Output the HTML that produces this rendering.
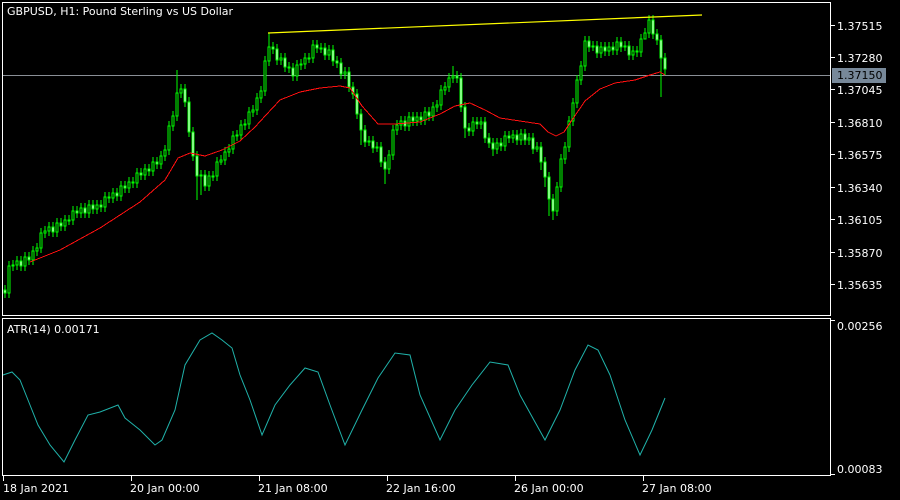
<!DOCTYPE html>
<html><head><meta charset="utf-8">
<style>
html,body{margin:0;padding:0;background:#000;width:900px;height:500px;overflow:hidden}
svg{display:block}
text{font-family:"DejaVu Sans","Liberation Sans",sans-serif;font-size:11px;fill:#fff}
.b{fill:#000;stroke:#00ff00;stroke-width:1}
.w{fill:#fff;stroke:#00ff00;stroke-width:1}
</style></head>
<body>
<svg width="900" height="500" xmlns="http://www.w3.org/2000/svg" shape-rendering="crispEdges">
<rect x="0" y="0" width="900" height="500" fill="#000"/>
<line x1="3" y1="75.5" x2="830" y2="75.5" stroke="#8a8f96" stroke-width="1"/>
<path fill="none" stroke="#00ff00" stroke-width="1" d="M5 285V298M9 261V298M13 260V271M17 256V270M21 256V271M25 252V271M29 252V265M33 246V265M37 243V256M41 228V253M45 226V238M49 222V236M53 222V237M57 218V237M61 218V231M65 215V231M69 215V225M73 206V225M77 206V218M81 203V218M85 203V218M89 200V218M93 200V214M97 200V214M101 200V212M105 192V212M109 192V203M113 188V203M117 188V201M121 181V201M125 181V193M129 177V193M133 177V188M137 168V188M141 168V180M145 164V180M149 164V176M153 157V176M157 157V169M161 151V169M165 145V161M169 121V155M173 111V131M177 70V121M181 84V98M185 84V107M189 97V137M193 127V161M197 151V200M201 170V195M205 170V191M209 171V191M213 171V181M217 157V181M221 155V165M225 147V165M229 144V157M233 131V154M237 130V141M241 120V140M245 119V130M249 107V129M253 105V117M257 93V115M261 86V103M265 56V96M269 33V66M273 42V54M277 44V65M281 53V65M285 53V72M289 62V73M293 63V81M297 60V81M301 59V70M305 53V69M309 53V63M313 40V63M317 40V53M321 43V53M325 43V60M329 45V60M333 45V66M337 56V68M341 58V79M345 67V79M349 67V92M353 82V99M357 89V119M361 109V145M365 125V147M369 136V146M373 136V153M377 142V152M381 142V167M385 157V184M389 150V174M393 125V160M397 120V135M401 116V130M405 116V131M409 112V131M413 112V126M417 112V126M421 112V125M425 107V125M429 107V121M433 102V121M437 100V112M441 85V110M445 82V95M449 73V92M453 66V83M457 71V83M461 73V112M465 102V138M469 123V136M473 117V136M477 117V129M481 117V129M485 117V143M489 133V148M493 138V156M497 138V154M501 138V151M505 131V151M509 131V143M513 130V143M517 130V145M521 129V145M525 129V145M529 133V145M533 133V154M537 142V152M541 142V170M545 157V187M549 172V216M553 194V220M557 182V216M561 154V192M565 142V164M569 116V152M573 98V126M577 75V108M581 61V85M585 36V71M589 36V52M593 41V51M597 41V58M601 42V58M605 42V56M609 42V56M613 42V55M617 37V55M621 37V52M625 41V51M629 41V60M633 46V60M637 46V57M641 34V57M645 28V38M649 15V38M653 15V39M657 29V45M661 35V97M665 53V75"/>
<g>
<rect class="w" x="4" y="290" width="2" height="3"/><rect class="b" x="8" y="266" width="2" height="27"/><rect class="b" x="12" y="265" width="2" height="1"/><rect class="b" x="16" y="261" width="2" height="4"/><rect class="w" x="20" y="261" width="2" height="5"/><rect class="b" x="24" y="257" width="2" height="9"/><rect class="w" x="28" y="257" width="2" height="3"/><rect class="b" x="32" y="251" width="2" height="9"/><rect class="b" x="36" y="248" width="2" height="3"/><rect class="b" x="40" y="233" width="2" height="15"/>
<rect class="b" x="44" y="231" width="2" height="2"/><rect class="b" x="48" y="227" width="2" height="4"/><rect class="w" x="52" y="227" width="2" height="5"/><rect class="b" x="56" y="223" width="2" height="9"/><rect class="w" x="60" y="223" width="2" height="3"/><rect class="b" x="64" y="220" width="2" height="6"/><rect class="b" x="68" y="220" width="2" height="1"/><rect class="b" x="72" y="211" width="2" height="9"/><rect class="w" x="76" y="211" width="2" height="2"/><rect class="b" x="80" y="208" width="2" height="5"/>
<rect class="w" x="84" y="208" width="2" height="5"/><rect class="b" x="88" y="205" width="2" height="8"/><rect class="w" x="92" y="205" width="2" height="4"/><rect class="b" x="96" y="205" width="2" height="4"/><rect class="w" x="100" y="205" width="2" height="2"/><rect class="b" x="104" y="197" width="2" height="10"/><rect class="w" x="108" y="197" width="2" height="1"/><rect class="b" x="112" y="193" width="2" height="5"/><rect class="w" x="116" y="193" width="2" height="3"/><rect class="b" x="120" y="186" width="2" height="10"/>
<rect class="w" x="124" y="186" width="2" height="2"/><rect class="b" x="128" y="182" width="2" height="6"/><rect class="w" x="132" y="182" width="2" height="1"/><rect class="b" x="136" y="173" width="2" height="10"/><rect class="w" x="140" y="173" width="2" height="2"/><rect class="b" x="144" y="169" width="2" height="6"/><rect class="w" x="148" y="169" width="2" height="2"/><rect class="b" x="152" y="162" width="2" height="9"/><rect class="w" x="156" y="162" width="2" height="2"/><rect class="b" x="160" y="156" width="2" height="8"/>
<rect class="b" x="164" y="150" width="2" height="6"/><rect class="b" x="168" y="126" width="2" height="24"/><rect class="b" x="172" y="116" width="2" height="10"/><rect class="b" x="176" y="93" width="2" height="23"/><rect class="b" x="180" y="89" width="2" height="4"/><rect class="w" x="184" y="89" width="2" height="13"/><rect class="w" x="188" y="102" width="2" height="30"/><rect class="w" x="192" y="132" width="2" height="24"/><rect class="w" x="196" y="156" width="2" height="20"/><rect class="b" x="200" y="175" width="2" height="1"/>
<rect class="w" x="204" y="175" width="2" height="11"/><rect class="b" x="208" y="176" width="2" height="10"/><rect class="b" x="212" y="176" width="2" height="1"/><rect class="b" x="216" y="162" width="2" height="14"/><rect class="b" x="220" y="160" width="2" height="2"/><rect class="b" x="224" y="152" width="2" height="8"/><rect class="b" x="228" y="149" width="2" height="3"/><rect class="b" x="232" y="136" width="2" height="13"/><rect class="b" x="236" y="135" width="2" height="1"/><rect class="b" x="240" y="125" width="2" height="10"/>
<rect class="b" x="244" y="124" width="2" height="1"/><rect class="b" x="248" y="112" width="2" height="12"/><rect class="b" x="252" y="110" width="2" height="2"/><rect class="b" x="256" y="98" width="2" height="12"/><rect class="b" x="260" y="91" width="2" height="7"/><rect class="b" x="264" y="61" width="2" height="30"/><rect class="b" x="268" y="47" width="2" height="14"/><rect class="w" x="272" y="47" width="2" height="2"/><rect class="w" x="276" y="49" width="2" height="11"/><rect class="b" x="280" y="58" width="2" height="2"/>
<rect class="w" x="284" y="58" width="2" height="9"/><rect class="w" x="288" y="67" width="2" height="1"/><rect class="w" x="292" y="68" width="2" height="8"/><rect class="b" x="296" y="65" width="2" height="11"/><rect class="b" x="300" y="64" width="2" height="1"/><rect class="b" x="304" y="58" width="2" height="6"/><rect class="b" x="308" y="58" width="2" height="1"/><rect class="b" x="312" y="45" width="2" height="13"/><rect class="w" x="316" y="45" width="2" height="3"/><rect class="b" x="320" y="48" width="2" height="1"/>
<rect class="w" x="324" y="48" width="2" height="7"/><rect class="b" x="328" y="50" width="2" height="5"/><rect class="w" x="332" y="50" width="2" height="11"/><rect class="w" x="336" y="61" width="2" height="2"/><rect class="w" x="340" y="63" width="2" height="11"/><rect class="b" x="344" y="72" width="2" height="2"/><rect class="w" x="348" y="72" width="2" height="15"/><rect class="w" x="352" y="87" width="2" height="7"/><rect class="w" x="356" y="94" width="2" height="20"/><rect class="w" x="360" y="114" width="2" height="16"/>
<rect class="w" x="364" y="130" width="2" height="12"/><rect class="b" x="368" y="141" width="2" height="1"/><rect class="w" x="372" y="141" width="2" height="7"/><rect class="b" x="376" y="147" width="2" height="1"/><rect class="w" x="380" y="147" width="2" height="15"/><rect class="w" x="384" y="162" width="2" height="7"/><rect class="b" x="388" y="155" width="2" height="14"/><rect class="b" x="392" y="130" width="2" height="25"/><rect class="b" x="396" y="125" width="2" height="5"/><rect class="b" x="400" y="121" width="2" height="4"/>
<rect class="w" x="404" y="121" width="2" height="5"/><rect class="b" x="408" y="117" width="2" height="9"/><rect class="w" x="412" y="117" width="2" height="4"/><rect class="b" x="416" y="117" width="2" height="4"/><rect class="w" x="420" y="117" width="2" height="3"/><rect class="b" x="424" y="112" width="2" height="8"/><rect class="w" x="428" y="112" width="2" height="4"/><rect class="b" x="432" y="107" width="2" height="9"/><rect class="b" x="436" y="105" width="2" height="2"/><rect class="b" x="440" y="90" width="2" height="15"/>
<rect class="b" x="444" y="87" width="2" height="3"/><rect class="b" x="448" y="78" width="2" height="9"/><rect class="b" x="452" y="76" width="2" height="2"/><rect class="w" x="456" y="76" width="2" height="2"/><rect class="w" x="460" y="78" width="2" height="29"/><rect class="w" x="464" y="107" width="2" height="21"/><rect class="w" x="468" y="128" width="2" height="3"/><rect class="b" x="472" y="122" width="2" height="9"/><rect class="w" x="476" y="122" width="2" height="2"/><rect class="b" x="480" y="122" width="2" height="2"/>
<rect class="w" x="484" y="122" width="2" height="16"/><rect class="w" x="488" y="138" width="2" height="5"/><rect class="w" x="492" y="143" width="2" height="6"/><rect class="b" x="496" y="143" width="2" height="6"/><rect class="w" x="500" y="143" width="2" height="3"/><rect class="b" x="504" y="136" width="2" height="10"/><rect class="w" x="508" y="136" width="2" height="2"/><rect class="b" x="512" y="135" width="2" height="3"/><rect class="w" x="516" y="135" width="2" height="5"/><rect class="b" x="520" y="134" width="2" height="6"/>
<rect class="w" x="524" y="134" width="2" height="6"/><rect class="b" x="528" y="138" width="2" height="2"/><rect class="w" x="532" y="138" width="2" height="11"/><rect class="b" x="536" y="147" width="2" height="2"/><rect class="w" x="540" y="147" width="2" height="15"/><rect class="w" x="544" y="162" width="2" height="15"/><rect class="w" x="548" y="177" width="2" height="22"/><rect class="w" x="552" y="199" width="2" height="12"/><rect class="b" x="556" y="187" width="2" height="24"/><rect class="b" x="560" y="159" width="2" height="28"/>
<rect class="b" x="564" y="147" width="2" height="12"/><rect class="b" x="568" y="121" width="2" height="26"/><rect class="b" x="572" y="103" width="2" height="18"/><rect class="b" x="576" y="80" width="2" height="23"/><rect class="b" x="580" y="66" width="2" height="14"/><rect class="b" x="584" y="41" width="2" height="25"/><rect class="w" x="588" y="41" width="2" height="6"/><rect class="b" x="592" y="46" width="2" height="1"/><rect class="w" x="596" y="46" width="2" height="7"/><rect class="b" x="600" y="47" width="2" height="6"/>
<rect class="w" x="604" y="47" width="2" height="4"/><rect class="b" x="608" y="47" width="2" height="4"/><rect class="w" x="612" y="47" width="2" height="3"/><rect class="b" x="616" y="42" width="2" height="8"/><rect class="w" x="620" y="42" width="2" height="5"/><rect class="b" x="624" y="46" width="2" height="1"/><rect class="w" x="628" y="46" width="2" height="9"/><rect class="b" x="632" y="51" width="2" height="4"/><rect class="w" x="636" y="51" width="2" height="1"/><rect class="b" x="640" y="39" width="2" height="13"/>
<rect class="b" x="644" y="33" width="2" height="6"/><rect class="b" x="648" y="20" width="2" height="13"/><rect class="w" x="652" y="20" width="2" height="14"/><rect class="w" x="656" y="34" width="2" height="6"/><rect class="w" x="660" y="40" width="2" height="18"/><rect class="w" x="664" y="58" width="2" height="11"/>
</g>
<polyline fill="none" stroke="#ff1010" stroke-width="1" points="30,262 60,250 100,228 140,202 165,180 178,158 190,153 205,156 222,150 240,141 255,127 266,115 280,100 300,92 320,88 340,86 350,88 362,106 378,124 395,124 420,122 440,114 455,106 470,103 485,110 500,118 520,121 540,124 548,132 556,136 564,132 572,120 585,101 600,89 615,83 635,80 650,75 660,72 665,75"/>
<line x1="268" y1="33" x2="702" y2="15" stroke="#ffff00" stroke-width="1.2" shape-rendering="auto"/>
<polyline fill="none" stroke="#20b2aa" stroke-width="1" shape-rendering="auto" points="3,375 12,372 20,380 28,400 38,425 50,445 64,462 75,440 88,415 100,412 118,405 125,418 140,430 155,445 162,440 175,410 185,365 200,340 212,333 222,340 232,348 240,375 250,400 262,435 275,405 290,385 305,368 318,372 330,405 345,445 362,410 378,378 395,353 410,355 420,395 440,440 455,410 472,385 490,362 508,365 520,395 545,440 560,410 575,370 588,345 598,350 610,375 625,420 640,455 652,430 665,398"/>
<rect x="2.5" y="2.5" width="828" height="313" fill="none" stroke="#fff"/>
<rect x="2.5" y="318.5" width="828" height="157" fill="none" stroke="#fff"/>
<text x="7" y="15">GBPUSD, H1:  Pound Sterling vs US Dollar</text>
<text x="7" y="333">ATR(14) 0.00171</text>
<path stroke="#fff" d="M831 25.5H835M831 57.5H835M831 89.5H835M831 122.5H835M831 154.5H835M831 187.5H835M831 219.5H835M831 252.5H835M831 284.5H835M831 320.5H835M831 474.5H835M3.5 476V481M131.5 476V481M259.5 476V481M387.5 476V481M515.5 476V481M643.5 476V481"/>
<rect x="832" y="68" width="54" height="15" fill="#778899"/>
<text x="837" y="79" style="fill:#000">1.37150</text>
<text x="837" y="30">1.37515</text>
<text x="837" y="62">1.37280</text>
<text x="837" y="94">1.37045</text>
<text x="837" y="127">1.36810</text>
<text x="837" y="159">1.36575</text>
<text x="837" y="192">1.36340</text>
<text x="837" y="224">1.36105</text>
<text x="837" y="257">1.35870</text>
<text x="837" y="289">1.35635</text>
<text x="837" y="330">0.00256</text>
<text x="837" y="473">0.00083</text>
<text x="3" y="492">18 Jan 2021</text>
<text x="130" y="492">20 Jan 00:00</text>
<text x="258" y="492">21 Jan 08:00</text>
<text x="386" y="492">22 Jan 16:00</text>
<text x="514" y="492">26 Jan 00:00</text>
<text x="642" y="492">27 Jan 08:00</text>
</svg>
</body></html>
